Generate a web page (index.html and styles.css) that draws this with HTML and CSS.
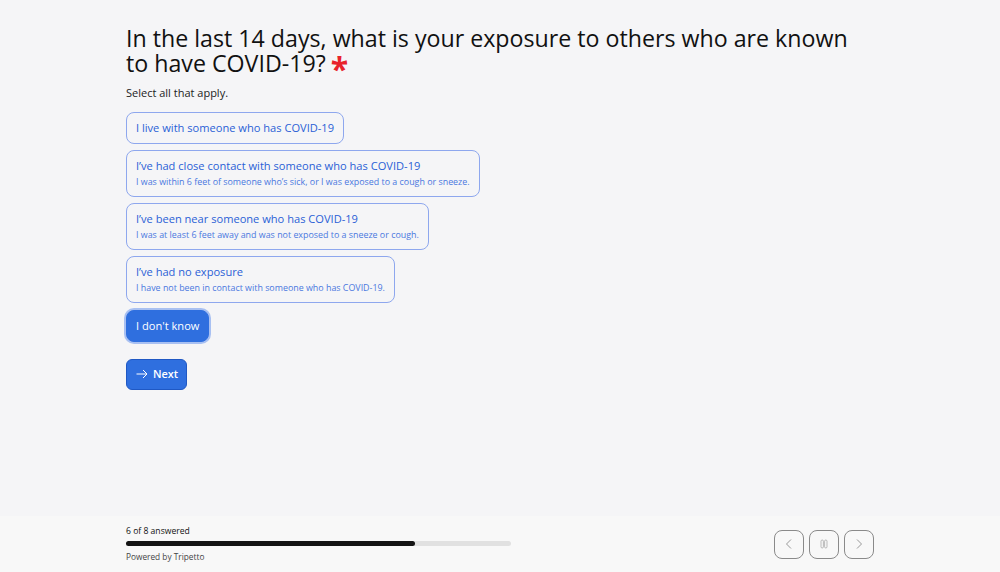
FILE: index.html
```html
<!DOCTYPE html>
<html lang="en">
<head>
  <meta charset="UTF-8">
  <title>COVID-19 exposure</title>
  <meta name="viewport" content="width=device-width, initial-scale=1.0">
  <link rel="stylesheet" href="styles.css">
</head>
<body>
  <main class="form">
    <h1 class="question">In the last 14 days, what is your exposure to others who are known to have COVID-19?<span class="required">*</span></h1>
    <p class="hint">Select all that apply.</p>
    <div class="options">
      <button class="option">I live with someone who has COVID-19</button>
      <button class="option">I’ve had close contact with someone who has COVID-19<small>I was within 6 feet of someone who’s sick, or I was exposed to a cough or sneeze.</small></button>
      <button class="option">I’ve been near someone who has COVID-19<small>I was at least 6 feet away and was not exposed to a sneeze or cough.</small></button>
      <button class="option">I’ve had no exposure<small>I have not been in contact with someone who has COVID-19.</small></button>
      <button class="option selected">I don't know</button>
    </div>
    <button class="next"><svg class="arrow" width="12" height="10" viewBox="0 0 12 10"><path d="M0.5 5 H11 M7 1 L11 5 L7 9" fill="none" stroke="#fff" stroke-width="1"/></svg>Next</button>
  </main>
  <footer class="bar">
    <div class="progress">
      <div class="count">6 of 8 answered</div>
      <div class="track"><div class="fill" style="width: 75%"></div></div>
      <div class="powered">Powered by Tripetto</div>
    </div>
    <div class="nav">
      <button class="nav-btn"><svg width="12" height="12" viewBox="0 0 12 12"><path d="M8 1.5 L3.5 6 L8 10.5" fill="none" stroke="#999" stroke-width="1"/></svg></button>
      <button class="nav-btn"><svg width="12" height="12" viewBox="0 0 12 12"><rect x="3" y="2" width="2.4" height="8" rx="1.2" fill="none" stroke="#aaa" stroke-width="0.8"/><rect x="6.6" y="2" width="2.4" height="8" rx="1.2" fill="none" stroke="#aaa" stroke-width="0.8"/></svg></button>
      <button class="nav-btn"><svg width="12" height="12" viewBox="0 0 12 12"><path d="M4 1.5 L8.5 6 L4 10.5" fill="none" stroke="#999" stroke-width="1"/></svg></button>
    </div>
  </footer>
</body>
</html>
```

FILE: styles.css
```css
* { box-sizing: border-box; }
html, body { height: 100%; }
body { margin: 0; background: #f5f5f7; font-family: "Open Sans", "Noto Sans", sans-serif; color: #111; display: flex; flex-direction: column; }
.form { width: 748px; margin: 0 auto; padding-top: 26px; flex: 1; }
.question { font-size: 23.2px; font-weight: 400; line-height: 25px; margin: 0; color: #111; }
.required { display: inline-block; color: #e8222b; font-size: 32px; font-weight: 700; margin-left: 5px; line-height: 0; vertical-align: -9px; }
.hint { font-size: 11px; margin: 9px 0 11px; line-height: 16px; color: #222; }
.options { display: flex; flex-direction: column; align-items: flex-start; gap: 6px; }
.option { font-family: inherit; font-size: 11.1px; color: #2a5fd6; background: transparent; border: 1px solid #8ea7ee; border-radius: 8px; padding: 7px 9px; line-height: 16px; text-align: left; }
.option small { display: block; font-size: 8.9px; line-height: 12px; margin: 2px 0 1px; color: #4a78e0; }
.option.selected { background: #2f6fdf; border-color: #2f6fdf; color: #fff; box-shadow: 0 0 0 2px #a8c0f2; margin-top: 1px; }
.next { display: flex; align-items: center; margin-top: 17px; font-family: inherit; font-size: 10.9px; font-weight: 600; color: #fff; background: #2f6fdf; border: 1px solid #1f58c4; border-radius: 6px; padding: 6px 8px 7px 9px; line-height: 16px; }
.arrow { margin-right: 5px; }
.bar { height: 56px; background: #f8f8f8; display: flex; justify-content: space-between; align-items: center; padding: 0 126px; }
.progress { width: 385px; }
.count { font-size: 8.6px; color: #111; line-height: 12px; margin-bottom: 4px; }
.track { height: 5px; background: #e1e1e1; border-radius: 3px; }
.fill { height: 5px; background: #141414; border-radius: 3px; }
.powered { font-size: 8.3px; color: #444; line-height: 12px; margin-top: 5px; }
.nav { display: flex; gap: 5px; }
.nav-btn { width: 30px; height: 29px; border: 1px solid #8a8a8a; border-radius: 8px; background: transparent; display: flex; align-items: center; justify-content: center; padding: 0; }
```
